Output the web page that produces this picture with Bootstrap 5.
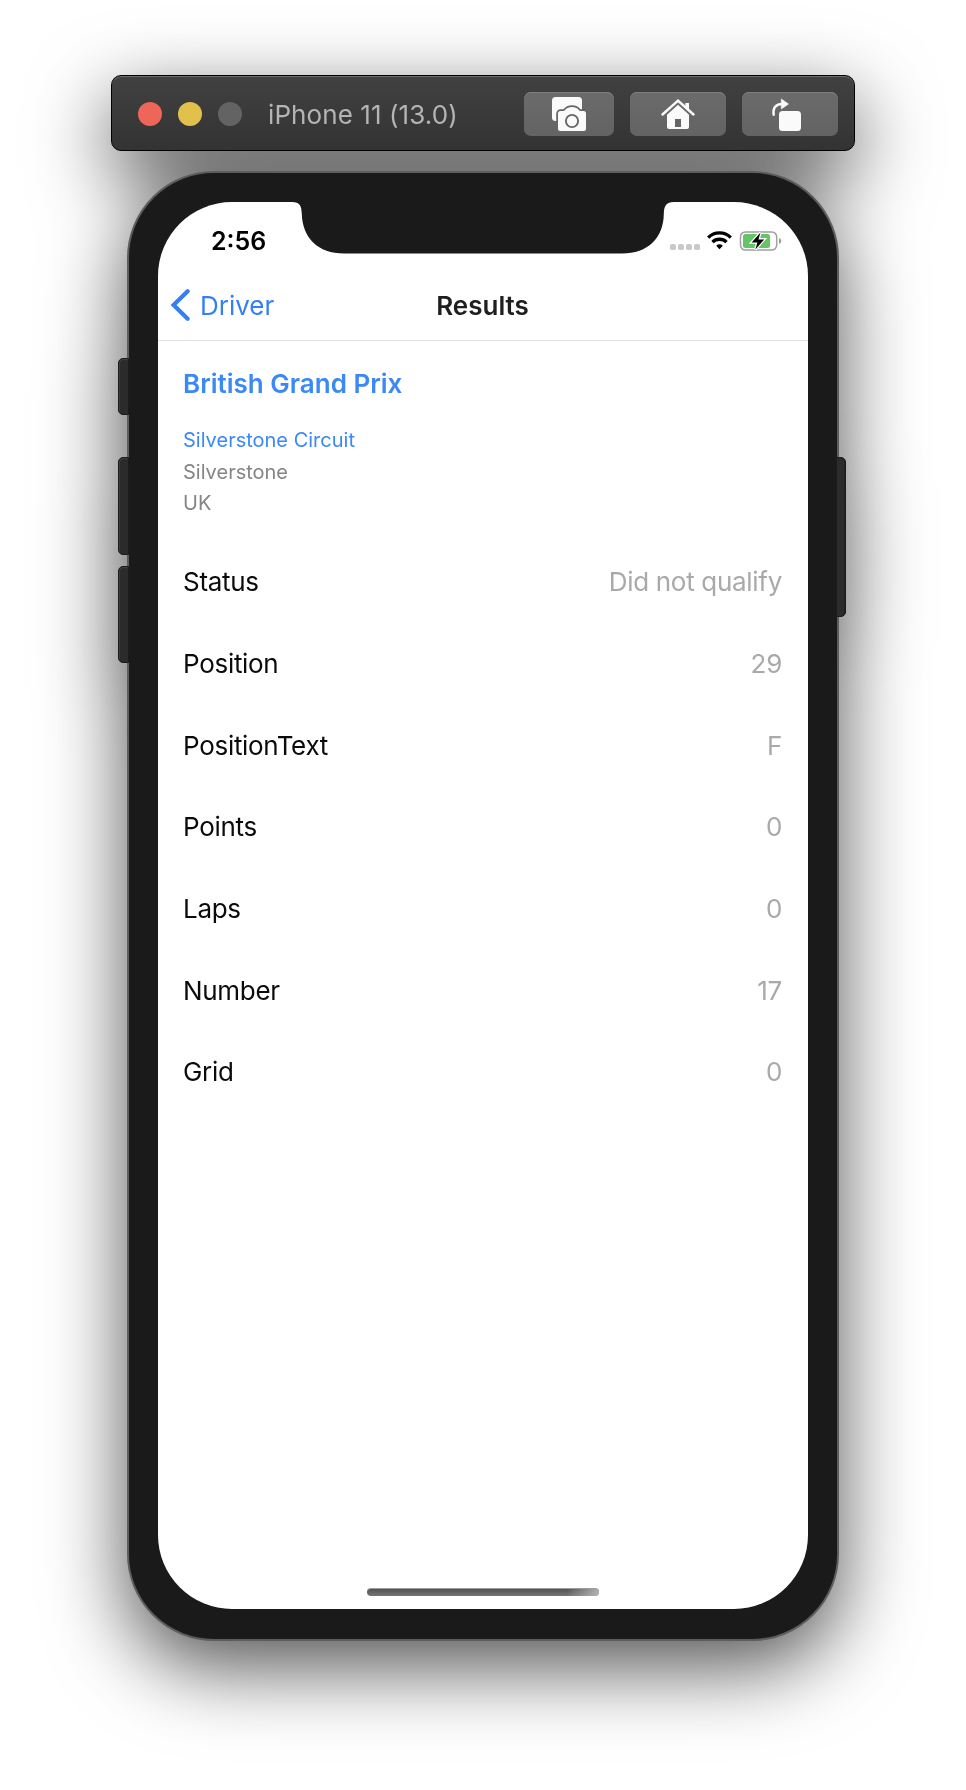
<!DOCTYPE html>
<html lang="en">
<head>
<meta charset="utf-8">
<meta name="viewport" content="width=device-width, initial-scale=1">
<title>iPhone 11 (13.0)</title>
<link href="https://cdn.jsdelivr.net/npm/bootstrap@5.3.0/dist/css/bootstrap.min.css" rel="stylesheet">
<style>
  body { font-family: Inter, "Liberation Sans", sans-serif; background: #fff; color: #0b0b0b; }
  .stage { height: 1790px; padding-top: 75px; overflow: hidden; }
  .simulator { filter: drop-shadow(0 26px 40px rgba(0,0,0,.68)); }

  /* simulator title bar */
  .titlebar { width: 744px; height: 76px; padding: 2px 16px 0 26px; margin-bottom: 20px; border: 1px solid #000; border-radius: 10px;
    background: linear-gradient(#414141, #333); box-shadow: inset 0 1px 0 #6c6c6c; }
  .light { width: 24px; height: 24px; }
  .light.close-dot { background: #ee6559; }
  .light.min-dot { background: #e1c04c; }
  .light.max-dot { background: #636363; }
  .window-title { font-size: 26px; line-height: 36px; color: #b4b4b4; letter-spacing: .08px; margin: 2px 0 0 26px; }
  .tool { height: 44px; width: 96px; padding: 0; border: 0; border-radius: 7px; background: linear-gradient(#6b6b6b, #636363); box-shadow: inset 0 1px 0 #7f7f7f; }
  .tool.narrow { width: 90px; }
  .tool svg, .status-icons svg, .back svg { display: block; }

  /* device */
  .rail { width: 9px; padding-top: 187px; }
  .key { width: 11px; border: 1px solid #1c1c1c; background: #2b2b2b; border-radius: 5px 0 0 5px; box-shadow: inset 1px 1px 0 #3c3c3c; }
  .key-mute { height: 57px; margin-bottom: 42px; }
  .key-up { height: 98px; margin-bottom: 11px; }
  .key-down { height: 97px; }
  .rail-right { padding-top: 286px; }
  .key-power { width: 10px; height: 160px; margin-left: -3px; border-radius: 0 5px 5px 0; box-shadow: inset -1px 0 0 #222; }
  .device { width: 712px; height: 1470px; padding: 29px; border: 2px solid #5d5d5d; border-radius: 87px; background: #1a1a1a; }
  .screen { width: 650px; height: 1407px; border-radius: 74px; background: #fff; overflow: hidden; }
  .status { height: 98px; }
  .notch { left: 134px; top: 0; }
  .clock { font-size: 25px; font-weight: 600; line-height: 30px; color: #000; margin: 24px 0 0 53px; }
  .status-icons { margin: 28px 26px 0 0; }

  /* navigation */
  .navrow { height: 41px; border-bottom: 1px solid #e1e1e1; }
  .navrow .back { color: #347ff6; font-size: 26px; line-height: 32px; width: 200px; padding-left: 12px; gap: 10px; margin-top: -12px; }
  .back-label { margin-top: 2px; }
  .navrow h1 { font-size: 26px; line-height: 32px; font-weight: 600; color: #1f1f1f; margin: -10px 1px 0 0; }
  .content-pad { padding: 27px 26px 0 25px; }
  .race { font-size: 26px; line-height: 32px; font-weight: 600; color: #3b89f7; margin-bottom: 25px; }
  .circuit { font-size: 20px; line-height: 31.6px; color: #858585; margin-bottom: 21px; }
  .circuit a { color: #3b89f7; text-decoration: none; }
  .fact { height: 81.7px; font-size: 26px; letter-spacing: -.3px; }
  .fact dt { font-weight: 400; }
  .fact dd { color: #a9a9a9; margin: 0; }
  .homebar { width: 232px; height: 8px; border-radius: 4px; margin-bottom: 13px; border-top: 1px solid #9a9d9a;
    background: linear-gradient(90deg, transparent 86%, rgba(190,190,190,.85)), linear-gradient(#515451, #747474); }
</style>
</head>
<body>
<main class="stage">
  <div class="simulator d-flex flex-column align-items-center">
    <header class="titlebar d-flex align-items-center flex-shrink-0">
      <div class="d-flex gap-3">
        <span class="light close-dot rounded-circle"></span>
        <span class="light min-dot rounded-circle"></span>
        <span class="light max-dot rounded-circle"></span>
      </div>
      <span class="window-title">iPhone 11 (13.0)</span>
      <div class="d-flex gap-3 ms-auto">
        <button class="tool narrow btn" aria-label="Screenshot">
          <svg width="90" height="44" viewBox="0 0 90 44">
            <rect x="28" y="5" width="30" height="24" rx="3.5" fill="#fafafa"/>
            <path d="M36.500 19H39.500C41.500 19 41.500 15 48 15S54.500 19 56.500 19H59.500A2.500 2.500 0 0 1 62 21.500V36.500A2.500 2.500 0 0 1 59.500 39H36.500A2.500 2.500 0 0 1 34 36.500V21.500A2.500 2.500 0 0 1 36.500 19Z" fill="#fafafa" stroke="#666" stroke-width="3.600" paint-order="stroke"/>
            <circle cx="48" cy="29" r="6.100" fill="none" stroke="#666" stroke-width="1.900"/>
          </svg>
        </button>
        <button class="tool btn" aria-label="Home">
          <svg width="96" height="44" viewBox="0 0 96 44">
            <path d="M55.300 11H59V19L55.300 15Z" fill="#fafafa"/>
            <path d="M32.500 22.500L48 8.600L63.500 22.500" fill="none" stroke="#fafafa" stroke-width="2.500" stroke-linecap="round"/>
            <path d="M48 12.700L59 22.700V35A2 2 0 0 1 57 37H39A2 2 0 0 1 37 35V22.700Z" fill="#fafafa"/>
            <path d="M45 27h6v8h-6z" fill="#646464"/>
          </svg>
        </button>
        <button class="tool btn" aria-label="Rotate">
          <svg width="96" height="44" viewBox="0 0 96 44">
            <path d="M31.700 22.800C30.500 15.500 34.500 12 40 12" fill="none" stroke="#fafafa" stroke-width="2.500" stroke-linecap="round"/>
            <path d="M39.300 7L46.500 12L39.300 17Z" fill="#fafafa" stroke="#fafafa" stroke-linejoin="round" stroke-width=".6"/>
            <rect x="37" y="19" width="22" height="20" rx="3.500" fill="#fafafa"/>
          </svg>
        </button>
      </div>
    </header>

    <div class="d-flex">
      <div class="rail position-relative z-1">
        <div class="key key-mute"></div>
        <div class="key key-up"></div>
        <div class="key key-down"></div>
      </div>
      <section class="device position-relative">
        <div class="screen d-flex flex-column position-relative">
          <svg class="notch position-absolute" width="382" height="52" viewBox="0 0 382 52">
            <path d="M0 0C8 0 9.500 4 9.800 12C10.500 36 26 51.500 52 51.500H330C356 51.500 371.500 36 371.800 12C372 4 374 0 382 0Z" fill="#1a1a1a"/>
          </svg>
          <div class="status d-flex justify-content-between align-items-start">
            <span class="clock">2:56</span>
            <div class="status-icons">
              <svg width="112" height="22" viewBox="0 0 112 22">
                <g fill="#c9c9c9">
                  <rect x="0" y="14" width="6" height="6" rx="1.800"/><rect x="8" y="14" width="6" height="6" rx="1.800"/>
                  <rect x="16" y="14" width="6" height="6" rx="1.800"/><rect x="24" y="14" width="6" height="6" rx="1.800"/>
                </g>
                <g fill="none" stroke="#000" stroke-width="3.300">
                  <path d="M38.200 7.600A16 16 0 0 1 60.800 7.600"/>
                  <path d="M42.500 12.100A10 10 0 0 1 56.500 12.100"/>
                </g>
                <path d="M46.200 15.700Q49.500 12.900 52.800 15.700L49.500 19.300Z"/>
                <rect x="70.500" y="1.900" width="36.200" height="18.200" rx="5" fill="none" stroke="#a0a0a0" stroke-width="1.500"/>
                <path d="M109 8Q111.300 8.800 111.300 11T109 14Z" fill="#999"/>
                <rect x="73" y="4" width="27" height="14" rx="2.500" fill="#64c466"/>
                <path d="M90.500 2.500L81.600 12.400H87.400L85.300 19.500L94.200 9.400H88.400Z" fill="#000" stroke="#fff" stroke-width="2.600" paint-order="stroke"/>
              </svg>
            </div>
          </div>
          <nav class="navrow d-flex justify-content-center align-items-start position-relative">
            <a class="back d-flex align-items-center text-decoration-none me-auto" href="#">
              <svg width="20" height="34" viewBox="0 0 20 34"><path d="M17.600 3.200L3.600 17L17.600 30.800" fill="none" stroke="#347ff6" stroke-width="4.200" stroke-linecap="round"/></svg>
              <span class="back-label">Driver</span>
            </a>
            <h1 class="title-text">Results</h1>
            <span class="ms-auto" style="width:200px"></span>
          </nav>
          <div class="content-pad">
            <h2 class="race">British Grand Prix</h2>
            <div class="circuit"><a href="#">Silverstone Circuit</a><br>Silverstone<br>UK</div>
            <dl class="mb-0">
              <div class="fact d-flex justify-content-between align-items-center"><dt>Status</dt><dd>Did not qualify</dd></div>
              <div class="fact d-flex justify-content-between align-items-center"><dt>Position</dt><dd>29</dd></div>
              <div class="fact d-flex justify-content-between align-items-center"><dt>PositionText</dt><dd>F</dd></div>
              <div class="fact d-flex justify-content-between align-items-center"><dt>Points</dt><dd>0</dd></div>
              <div class="fact d-flex justify-content-between align-items-center"><dt>Laps</dt><dd>0</dd></div>
              <div class="fact d-flex justify-content-between align-items-center"><dt>Number</dt><dd>17</dd></div>
              <div class="fact d-flex justify-content-between align-items-center"><dt>Grid</dt><dd>0</dd></div>
            </dl>
          </div>
          <div class="homebar mt-auto mx-auto"></div>
        </div>
      </section>
      <div class="rail rail-right position-relative z-1">
        <div class="key key-power"></div>
      </div>
    </div>
  </div>
</main>
<script src="https://cdn.jsdelivr.net/npm/bootstrap@5.3.0/dist/js/bootstrap.bundle.min.js"></script>
</body>
</html>
